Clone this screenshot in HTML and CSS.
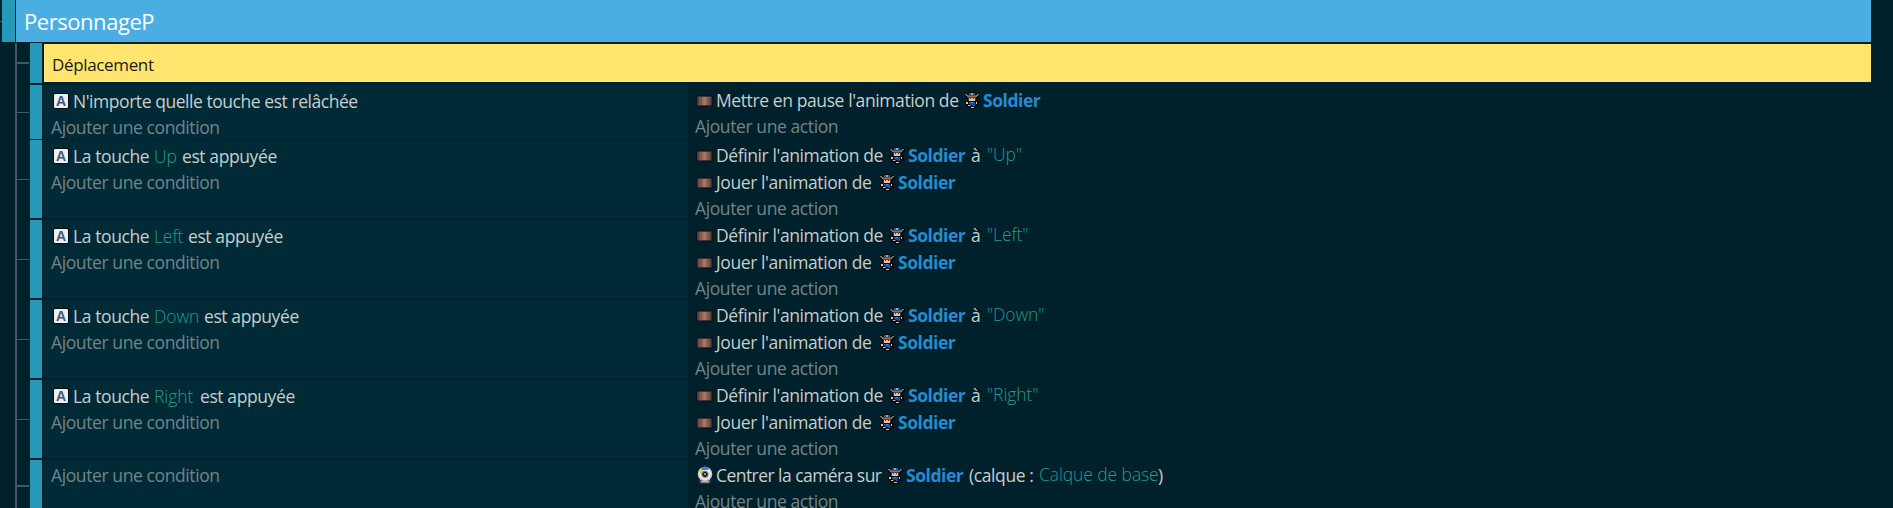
FILE: index.html
```html
<!DOCTYPE html>
<html lang="fr">
<head>
<meta charset="utf-8">
<title>PersonnageP</title>
<link rel="stylesheet" href="styles.css">
</head>
<body>
<svg class="defs" width="0" height="0">
  <defs>
    <linearGradient id="film" x1="0" x2="1"><stop offset="0" stop-color="#3b302e"/><stop offset=".2" stop-color="#7b594c"/><stop offset=".5" stop-color="#a87765"/><stop offset=".8" stop-color="#7b594c"/><stop offset="1" stop-color="#2b2828"/></linearGradient>
    <symbol id="anim" viewBox="0 0 17 12"><rect width="17" height="12" rx="2.500" fill="#0b1519"/><rect x="1" y="1" width="15" height="10" rx="2" fill="#3d3331"/><rect x="1" y="2" width="15" height="8" rx="1" fill="url(#film)"/><path d="M5.500 2v8M11.500 2v8" stroke="#6d4e43" stroke-width=".5"/></symbol>
    <symbol id="soldier" viewBox="0 0 16 17" shape-rendering="crispEdges">
      <path fill="#090d13" d="M5 0h6v1h4v1h1v3h-2v4h1v5h-3v3H5v-2H2v-2H1V9h2V5H1V4H0V1h5z"/>
      <path fill="#8b745f" d="M1 2h2v1h10V2h2v1h-1v1h-1v1H3V4H2V3H1z"/>
      <path fill="#2456a0" d="M5 1h2v2H5zM9 1h2v2H9zM4 3h8v1H4z"/>
      <path fill="#c5a064" d="M7 1h2v2H7z"/>
      <path fill="#54443b" d="M4 5h8v1H4z"/>
      <path fill="#f0bd98" d="M5 6h6v3H5zM2 10h2v2H2zM12 10h1v2h-1zM4 13h2v1H4zM7 15h3v1H7z"/>
      <path fill="#442923" d="M4 6h1v3H4zM11 6h1v3h-1zM6 6h1v1H6zM9 6h1v1H9z"/>
      <path fill="#0759b5" d="M5 10h2v1h2v-1h2v4H9v-1H7v1H6v-2H5z"/>
      <path fill="#5289c4" d="M7 10h2v1H7z"/>
    </symbol>
    <symbol id="camera" viewBox="0 0 16 18">
      <path d="M3 13h10l1 3-2 1.500H4L2 16z" fill="#514d4b"/><path d="M4 15h8v1.500H4z" fill="#b7b4b0"/>
      <circle cx="8" cy="8" r="7.300" fill="#c9c9cc"/><circle cx="8" cy="8" r="5.800" fill="#f1f1f3"/>
      <path d="M4 2q4-3 8 0l-1 2H5z" fill="#487fc5"/><circle cx="4.500" cy="6" r="2" fill="#e0d91e"/>
      <circle cx="8" cy="8.300" r="3.600" fill="#77777b"/><circle cx="8" cy="8.300" r="2.400" fill="#18181b"/><circle cx="8" cy="8" r="1.100" fill="#b7ba96"/>
    </symbol>
  </defs>
</svg>
<main class="sheet">
  <header class="group"><div class="root-tick"></div><div class="group-handle"></div><h1 class="group-title">PersonnageP</h1></header>
  <div class="children">
    <div class="event comment"><div class="tick thick"></div><div class="handle"></div><div class="comment-text">Déplacement</div></div>

    <div class="event short"><div class="tick"></div><div class="handle"></div>
      <div class="conditions"><div class="line"><span class="key">A</span><span class="any">N'importe quelle touche est relâchée</span></div><div class="add">Ajouter une condition</div></div>
      <div class="actions"><div class="line"><svg class="anim"><use href="#anim"/></svg><span class="pause">Mettre en pause l'animation de</span><svg class="soldier"><use href="#soldier"/></svg><b>Soldier</b></div><div class="add">Ajouter une action</div></div>
    </div>

    <div class="event"><div class="tick"></div><div class="handle"></div>
      <div class="conditions"><div class="line"><span class="key">A</span><span class="touch">La touche</span><i class="k-up">Up</i><span>est appuyée</span></div><div class="add">Ajouter une condition</div></div>
      <div class="actions"><div class="line"><svg class="anim"><use href="#anim"/></svg><span class="define">Définir l'animation de</span><svg class="soldier"><use href="#soldier"/></svg><b>Soldier</b><span class="to">à</span><i class="value">"Up"</i></div><div class="line"><svg class="anim"><use href="#anim"/></svg><span class="play">Jouer l'animation de</span><svg class="soldier"><use href="#soldier"/></svg><b>Soldier</b></div><div class="add">Ajouter une action</div></div>
    </div>

    <div class="event"><div class="tick"></div><div class="handle"></div>
      <div class="conditions"><div class="line"><span class="key">A</span><span class="touch">La touche</span><i class="k-left">Left</i><span>est appuyée</span></div><div class="add">Ajouter une condition</div></div>
      <div class="actions"><div class="line"><svg class="anim"><use href="#anim"/></svg><span class="define">Définir l'animation de</span><svg class="soldier"><use href="#soldier"/></svg><b>Soldier</b><span class="to">à</span><i class="value">"Left"</i></div><div class="line"><svg class="anim"><use href="#anim"/></svg><span class="play">Jouer l'animation de</span><svg class="soldier"><use href="#soldier"/></svg><b>Soldier</b></div><div class="add">Ajouter une action</div></div>
    </div>

    <div class="event"><div class="tick"></div><div class="handle"></div>
      <div class="conditions"><div class="line"><span class="key">A</span><span class="touch">La touche</span><i class="k-down">Down</i><span>est appuyée</span></div><div class="add">Ajouter une condition</div></div>
      <div class="actions"><div class="line"><svg class="anim"><use href="#anim"/></svg><span class="define">Définir l'animation de</span><svg class="soldier"><use href="#soldier"/></svg><b>Soldier</b><span class="to">à</span><i class="value">"Down"</i></div><div class="line"><svg class="anim"><use href="#anim"/></svg><span class="play">Jouer l'animation de</span><svg class="soldier"><use href="#soldier"/></svg><b>Soldier</b></div><div class="add">Ajouter une action</div></div>
    </div>

    <div class="event"><div class="tick"></div><div class="handle"></div>
      <div class="conditions"><div class="line"><span class="key">A</span><span class="touch">La touche</span><i class="k-right">Right</i><span>est appuyée</span></div><div class="add">Ajouter une condition</div></div>
      <div class="actions"><div class="line"><svg class="anim"><use href="#anim"/></svg><span class="define">Définir l'animation de</span><svg class="soldier"><use href="#soldier"/></svg><b>Soldier</b><span class="to">à</span><i class="value">"Right"</i></div><div class="line"><svg class="anim"><use href="#anim"/></svg><span class="play">Jouer l'animation de</span><svg class="soldier"><use href="#soldier"/></svg><b>Soldier</b></div><div class="add">Ajouter une action</div></div>
    </div>

    <div class="event last"><div class="tick thick"></div><div class="handle"></div>
      <div class="conditions"><div class="add">Ajouter une condition</div></div>
      <div class="actions"><div class="line"><svg class="camera"><use href="#camera"/></svg><span class="center">Centrer la caméra sur</span><svg class="soldier"><use href="#soldier"/></svg><b>Soldier</b><span class="layer">(calque :</span><i class="base">Calque de base</i><span>)</span></div><div class="add">Ajouter une action</div></div>
    </div>
  </div>
</main>
</body>
</html>
```
FILE: styles.css
```css
* { box-sizing: border-box; }
body { margin: 0; height: 508px; overflow: hidden; background: #00212b; color: #c8cdcd; font: 17.500px/26px "Open Sans", "Noto Sans", sans-serif; letter-spacing: -.4px; white-space: nowrap; }
.defs { position: absolute; }
.sheet { width: 1871px; height: 508px; overflow: hidden; }
.group { display: flex; height: 42px; }
.root-tick { width: 2px; height: 1px; margin-top: 21px; background: #4d636b; }
.group-handle { width: 13px; margin-right: 1px; background: #2799b8; }
.group-title { flex: 1; margin: 0; padding: 0 0 0 8px; background: #4aaee3; color: #fff; font-size: 22px; line-height: 43px; font-weight: 400; letter-spacing: -.45px; }
.children { display: flex; flex-direction: column; gap: 2px; height: 466px; margin: 1px 0 0 15px; border-left: 2px solid #435962; }
.event { display: grid; flex: none; grid-template: 100% / 13px 12px 2px 644px 1fr; height: 78px; }
.tick { align-self: center; height: 1px; width: 12px; background: #435962; }
.tick.thick { height: 2px; }
.handle { grid-column: 2; background: #2799b8; }
.comment { height: 40px; }
.comment-text { grid-column: 4 / 6; margin: 1px 0 1px; padding-left: 8px; line-height: 42px; background: #ffe56d; color: #1b1b18; font-size: 17px; letter-spacing: -.35px; }
.short { height: 54px; margin-bottom: -1px; }
.conditions { grid-column: 4; padding: 3px 0 0 7px; background: #002b36; }
.actions { grid-column: 5; padding: 2px 0 0 7px; }
.line { display: flex; height: 26px; }
.actions .line:has(+ .line) { height: 27px; }
.add { height: 26px; color: #738488; }
.key { width: 16px; height: 16px; margin: 5px 4px 0 2px; border: 1px solid #05090b; border-radius: 2px; background: #eceef0; color: #40587b; font: bold 14px/14px "Liberation Sans", sans-serif; letter-spacing: 0; text-align: center; }
.any { letter-spacing: -.45px; }
.anim { width: 17px; height: 12px; margin: 8px 3px 0 1px; }
.camera { width: 16px; height: 18px; margin: 4px 3px 0 2px; }
.soldier { width: 16px; height: 17px; margin: 5px 3px 0 0; }
i { font-style: normal; font-weight: 300; color: #27998b; letter-spacing: -.1px; }
.actions i { margin-top: -1px; }
b { width: 63px; color: #268bd2; letter-spacing: -.45px; }
.touch { width: 81px; }
.k-up { width: 28px; }
.k-left { width: 34px; }
.k-down { width: 50px; }
.k-right { width: 46px; }
.pause { width: 248px; }
.define { width: 173px; }
.play { width: 163px; }
.center { width: 171px; letter-spacing: -.55px; }
.to { width: 16px; }
.layer { width: 70px; }
.base { width: 119px; }
.last { height: 52px; }
.last .conditions { padding-top: 2px; }
.last .add { line-height: 27px; }
```
